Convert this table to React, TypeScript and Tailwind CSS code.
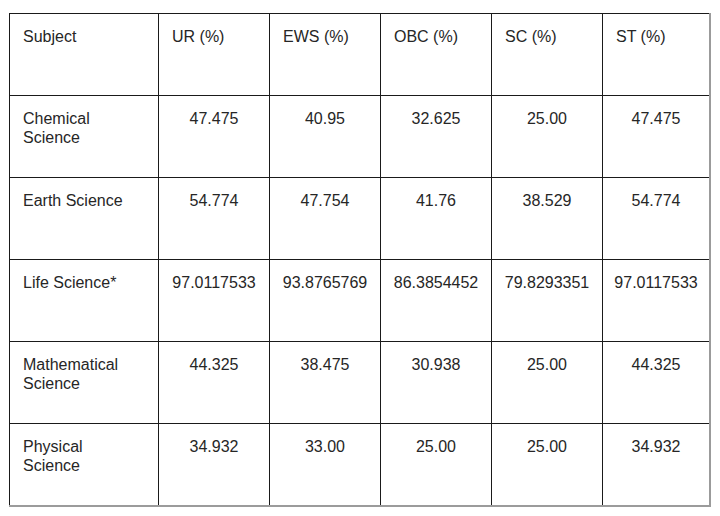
import React from "react";

const headers = ["Subject", "UR (%)", "EWS (%)", "OBC (%)", "SC (%)", "ST (%)"];

const rows: string[][] = [
  ["Chemical Science", "47.475", "40.95", "32.625", "25.00", "47.475"],
  ["Earth Science", "54.774", "47.754", "41.76", "38.529", "54.774"],
  ["Life Science*", "97.0117533", "93.8765769", "86.3854452", "79.8293351", "97.0117533"],
  ["Mathematical Science", "44.325", "38.475", "30.938", "25.00", "44.325"],
  ["Physical Science", "34.932", "33.00", "25.00", "25.00", "34.932"],
];

export default function App() {
  return (
    <div
      className="w-[720px] h-[516px] bg-white pt-[13px] pl-[9px]"
      style={{ fontFamily: '"Liberation Sans", Arial, sans-serif' }}
    >
      <div className="w-[702px] border-r-2 border-b-2 border-[#9b9b9b]">
        <div className="grid grid-cols-[149px_111px_111px_111px_111px_107px] grid-rows-[82px_82px_82px_82px_82px_82px] text-[16px] leading-[19px] text-[#262626]">
          {headers.map((h) => (
            <div
              key={h}
              className="border-l border-t border-[#1a1a1a] pt-[13px] pl-[13px] pr-[8px]"
            >
              {h}
            </div>
          ))}
          {rows.map((r) =>
            r.map((c, i) =>
              i === 0 ? (
                <div
                  key={r[0] + i}
                  className="border-l border-t border-[#1a1a1a] pt-[13px] pl-[13px] pr-[30px]"
                >
                  {c}
                </div>
              ) : (
                <div
                  key={r[0] + i}
                  className="border-l border-t border-[#1a1a1a] pt-[13px] text-center"
                >
                  {c}
                </div>
              )
            )
          )}
        </div>
      </div>
    </div>
  );
}
